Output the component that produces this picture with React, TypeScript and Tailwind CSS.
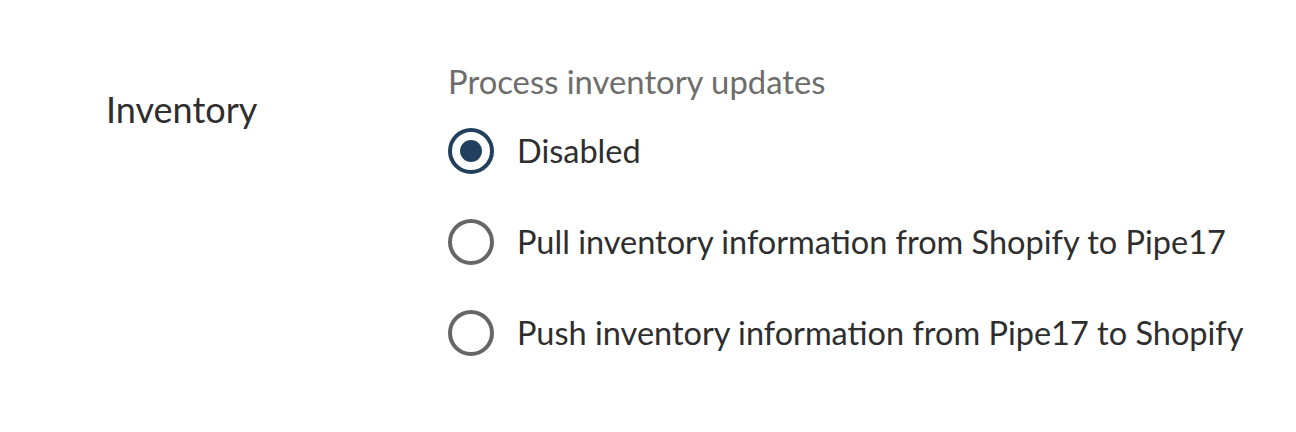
import React from "react";

function Radio({ checked }: { checked?: boolean }) {
  return checked ? (
    <span className="flex h-[46px] w-[46px] shrink-0 items-center justify-center rounded-full border-[4px] border-[#22405e]">
      <span className="h-[22px] w-[22px] rounded-full bg-[#22405e]" />
    </span>
  ) : (
    <span className="h-[46px] w-[46px] shrink-0 rounded-full border-[4px] border-[#666666]" />
  );
}

export default function App() {
  const options = [
    { label: "Disabled", checked: true },
    { label: "Pull inventory information from Shopify to Pipe17" },
    { label: "Push inventory information from Pipe17 to Shopify" },
  ];
  return (
    <div className="h-[432px] w-[1296px] bg-white font-['Lato',sans-serif] text-[#2e2e2e]">
      <div className="flex pt-[64px]">
        <div className="w-[448px] shrink-0 pl-[106px] pt-[25px] text-[36px] leading-[40px]">Inventory</div>
        <div className="flex flex-col">
          <div className="text-[32.8px] leading-[36px] text-[#6d6d6d]">Process inventory updates</div>
          <div className="mt-[28px] flex flex-col gap-[45px]">
            {options.map((o) => (
              <label key={o.label} className="flex items-center gap-[23px] text-[32.5px] leading-[46px]">
                <Radio checked={o.checked} />
                <span>{o.label}</span>
              </label>
            ))}
          </div>
        </div>
      </div>
    </div>
  );
}
